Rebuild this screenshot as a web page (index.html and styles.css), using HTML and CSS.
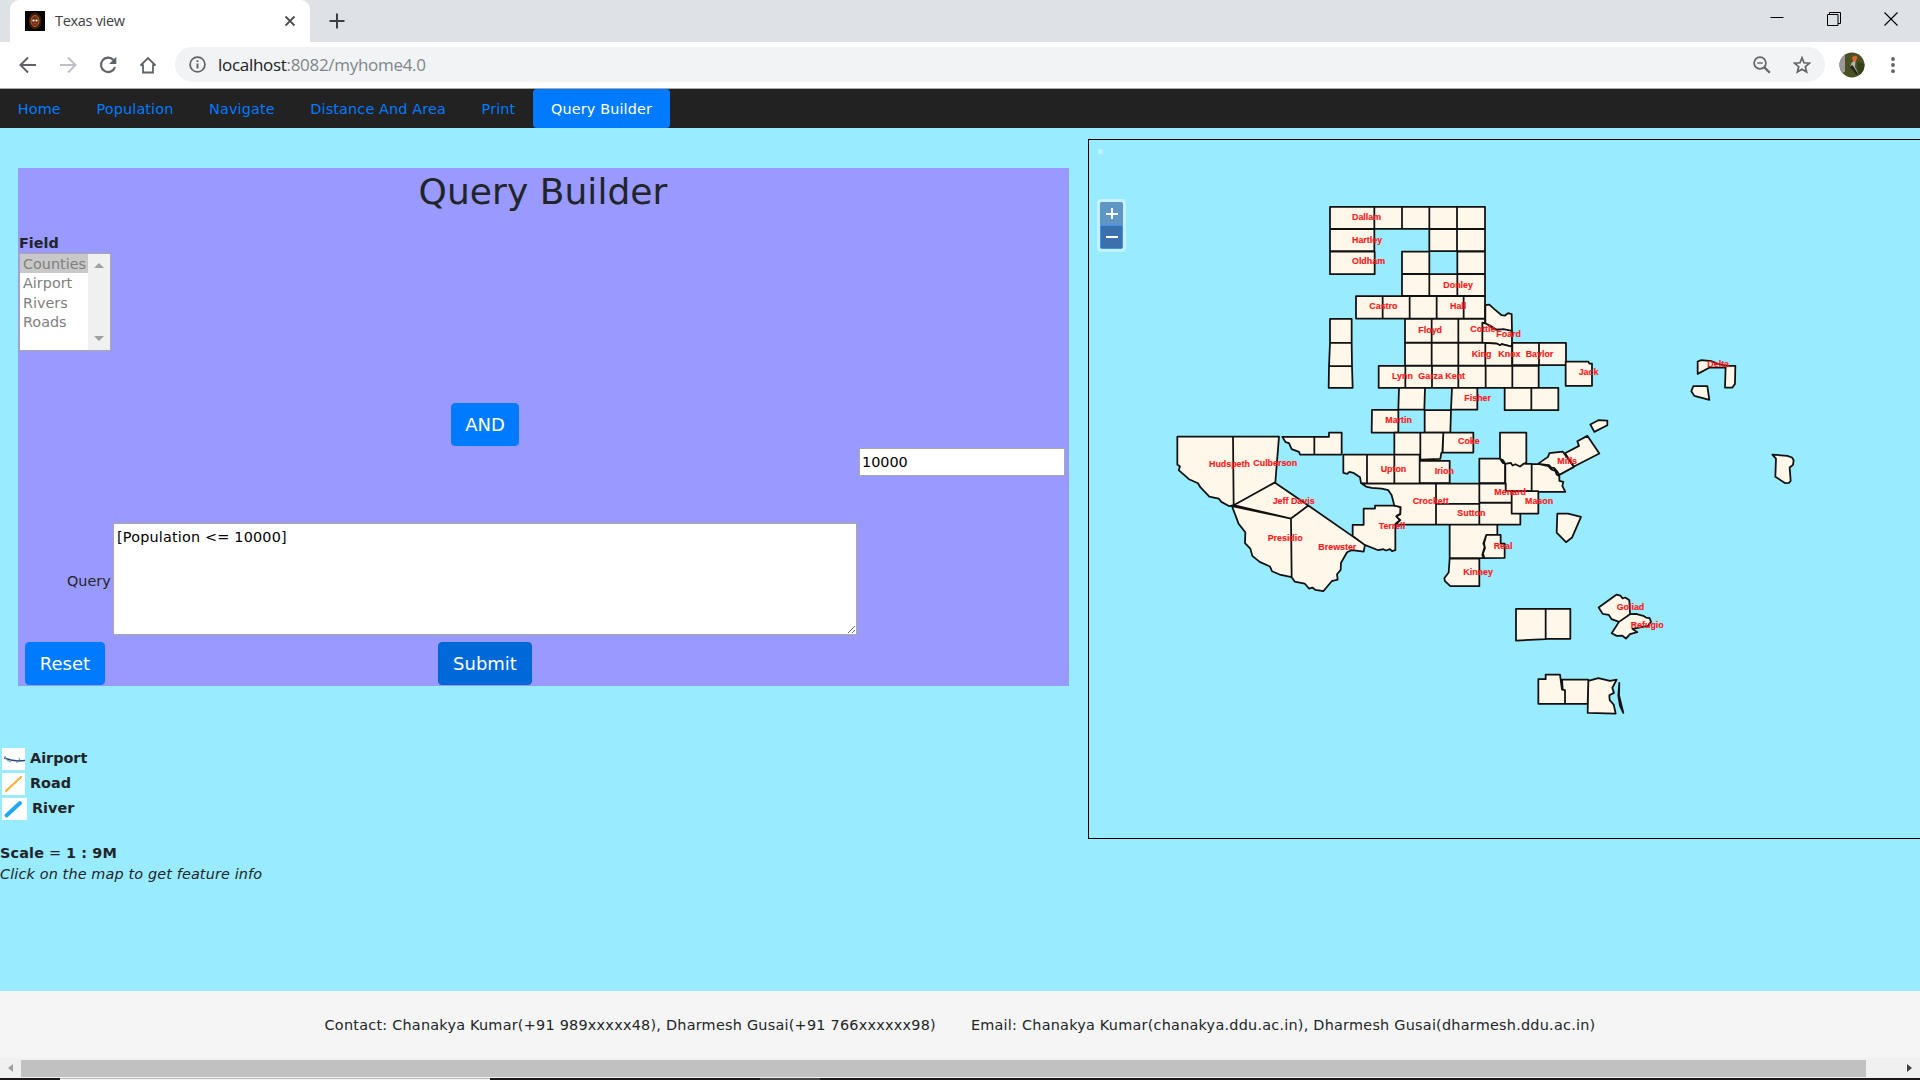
FILE: index.html
```html
<!DOCTYPE html>
<html lang="en">
<head>
<meta charset="utf-8">
<title>Texas view</title>
<link rel="stylesheet" href="styles.css">
</head>
<body>
<header class="tabstrip">
  <div class="tab">
    <svg class="favicon" width="20" height="20" viewBox="0 0 20 20"><rect width="20" height="20" fill="#050404"/><ellipse cx="10" cy="10" rx="6.5" ry="8.5" fill="#3a1c08"/><ellipse cx="10" cy="10" rx="4" ry="5.500" fill="#6e2f10" stroke="#b9682a"/><circle cx="8.500" cy="9.500" r="1.100" fill="#fff"/><circle cx="11.500" cy="9.500" r="1.100" fill="#fff"/><path d="M8.500 12.500h3" stroke="#c33" stroke-width="1.200"/></svg>
    <span class="tab-title">Texas view</span>
    <svg class="tab-close" width="12" height="12" viewBox="0 0 12 12"><path d="M1.500 1.500l9 9M10.500 1.500l-9 9" stroke="#4b4f54" stroke-width="1.800"/></svg>
  </div>
  <svg class="new-tab" width="16" height="16" viewBox="0 0 16 16"><path d="M8 .5v15M.5 8h15" stroke="#3c4043" stroke-width="2"/></svg>
  <div class="window-buttons">
    <svg width="14" height="14" viewBox="0 0 14 14"><path d="M.5 5.500h13" stroke="#000"/></svg>
    <svg width="14" height="14" viewBox="0 0 14 14"><path d="M.5 2.500h10.500v11h-10.500zM2.500 2.500v-2h11v11h-2.500" fill="none" stroke="#000"/></svg>
    <svg width="14" height="14" viewBox="0 0 14 14"><path d="M.5 .5l13 13M13.500 .5l-13 13" stroke="#000" stroke-width="1.100"/></svg>
  </div>
</header>
<div class="toolbar">
  <div class="nav-icons">
    <svg width="18" height="18" viewBox="0 0 18 18"><path d="M17 9H2M9 1.500L1.500 9 9 16.500" fill="none" stroke="#5f6368" stroke-width="2"/></svg>
    <svg width="18" height="18" viewBox="0 0 18 18"><path d="M1 9h15M9 1.500L16.500 9 9 16.500" fill="none" stroke="#bdc1c6" stroke-width="2"/></svg>
    <svg width="18" height="18" viewBox="0 0 18 18"><path d="M14.500 4A7.200 7.200 0 1 0 16 11.200" fill="none" stroke="#5f6368" stroke-width="2.100"/><path d="M17.300 .8v7.200h-7.200z" fill="#5f6368"/></svg>
    <svg width="18" height="18" viewBox="0 0 18 18"><path d="M4 8.500v8h10v-8M1.500 9.500L9 2l7.500 7.500M1.500 9h3M13.500 9h3" fill="none" stroke="#5f6368" stroke-width="1.800"/></svg>
  </div>
  <div class="address">
    <svg width="17" height="17" viewBox="0 0 17 17"><circle cx="8.500" cy="8.500" r="7.400" fill="none" stroke="#5f6368" stroke-width="1.700"/><path d="M8.500 7.600v5M8.500 4.200v1.900" stroke="#5f6368" stroke-width="1.900"/></svg>
    <span class="url"><b>localhost</b>:8082/myhome4.0</span>
    <svg class="zoom-icon" width="18" height="18" viewBox="0 0 18 18"><circle cx="7" cy="7" r="5.900" fill="none" stroke="#5f6368" stroke-width="1.700"/><path d="M4.200 7h5.600" stroke="#5f6368" stroke-width="1.400"/><path d="M11 11l5.800 5.800" stroke="#5f6368" stroke-width="2.200"/></svg>
    <svg class="star" width="18" height="18" viewBox="0 0 18 18"><path d="M9 1.800l2 5 5.400.4-4.100 3.500 1.300 5.300L9 13.200 4.400 16l1.300-5.300L1.600 7.200 7 6.800z" fill="none" stroke="#5f6368" stroke-width="1.700"/></svg>
  </div>
  <svg class="avatar" width="26" height="26" viewBox="0 0 26 26"><defs><clipPath id="face"><circle cx="13" cy="13" r="12.500"/></clipPath></defs><g clip-path="url(#face)"><rect width="26" height="26" fill="#4b5024"/><path d="M0 2l6 1v17l-6 2z" fill="#9a9898"/><path d="M18 10l8 2v14h-6z" fill="#34401c"/><path d="M13 5l4-1.500 1.500 2-1.500 3.500-3 1z" fill="#d9652a"/><path d="M13 10l3.500-1-.5 6 3 6-4-2-4-4z" fill="#b9b2a8"/><path d="M10.500 15l3-2 5 8-1 2-4-5z" fill="#25251f"/></g></svg>
  <svg class="dots" width="6" height="18" viewBox="0 0 6 18"><g fill="#5f6368"><circle cx="3" cy="3" r="1.900"/><circle cx="3" cy="9" r="1.900"/><circle cx="3" cy="15.200" r="1.900"/></g></svg>
</div>
<nav class="menu"><a>Home</a><a>Population</a><a>Navigate</a><a>Distance And Area</a><a>Print</a><a class="active">Query Builder</a></nav>
<main class="content">
  <section class="left">
    <form class="builder">
      <h1>Query Builder</h1>
      <div class="field">
        <strong>Field</strong>
        <div class="listbox">
          <ul><li class="selected"><span>Counties</span></li><li><span>Airport</span></li><li><span>Rivers</span></li><li><span>Roads</span></li></ul>
          <div class="list-scroll"><i class="up"></i><i class="down"></i></div>
        </div>
      </div>
      <div class="and-row"><button type="button" class="btn">AND</button></div>
      <div class="value-row"><input value="10000"></div>
      <div class="query-row"><label>Query</label><textarea>[Population &lt;= 10000]</textarea></div>
      <div class="actions"><button type="button" class="btn">Reset</button><button type="button" class="btn submit">Submit</button></div>
    </form>
    <ul class="legend">
      <li><svg width="23" height="22" viewBox="0 0 23 22"><rect width="23" height="22" fill="#fff"/><path d="M2 10l7 2 7 1 7-.6" fill="none" stroke="#27476d" stroke-width="1.500"/><path d="M3 8l1 3M5 12l4 2M15 13v2M17 10l1 2" stroke="#6f9fc5" stroke-width="1.200"/></svg><span>Airport</span></li>
      <li><svg width="23" height="22" viewBox="0 0 23 22"><rect width="23" height="22" fill="#fff"/><path d="M4 18L19 4" stroke="#ffaf3d" stroke-width="2.200" stroke-linecap="round"/></svg><span>Road</span></li>
      <li><svg width="25" height="22" viewBox="0 0 25 22"><rect width="25" height="22" fill="#fff"/><path d="M4.500 17.500L18 5" stroke="#22a9f5" stroke-width="4" stroke-linecap="round"/></svg><span>River</span></li>
    </ul>
    <p class="scale"><b>Scale</b> = <b>1 : 9M</b></p>
    <p class="hint">Click on the map to get feature info</p>
  </section>
  <section class="map">
    <svg class="counties" width="831" height="698" viewBox="1089 139.800 831 698">
      <g class="shapes" transform="translate(1080 130) scale(.33333)">
        <path d="M750 230H883V296H750zM883 230H966V296H883zM966 230H1048V296H966zM1048 230H1131V296H1048zM1131 230H1215V296H1131zM750 297H883V363H750zM1048 297H1131V363H1048zM1131 297H1215V363H1131zM750 364H884V432H750zM966 364H1048V431H966zM1132 364H1215V431H1132zM966 432H1048V497H966zM1048 432H1132V497H1048zM1132 432H1215V497H1132z"/>
        <path d="M828 498H908V565H828zM908 498H989V565H908zM989 498H1070V565H989zM1070 498H1151V565H1070zM1151 498H1215V565H1151zM750 566H815V638H750zM750 638H815L816 708H747zM747 708H816L818 773H746z"/>
        <path d="M975 566H1055V637H975zM1055 566H1135V637H1055zM1135 566H1215V578L1207 577V637H1135zM1216 525L1228 523 1242 536 1265 555 1275 556 1284 549 1295 552 1296 602 1270 597 1250 599 1230 586 1216 580zM1207 577L1218 580 1245 598 1270 597 1296 602V650L1265 642 1260 645 1250 640 1207 637z"/>
      </g>
      <g class="shapes" transform="translate(1300 300) scale(.33333)">
        <path d="M315 128H395V196H315zM395 128H475V196H395zM475 128H556V196H475zM556 128L590 130 600 135 605 132 636 139V196H556zM637 128H717V195H637zM717 128H798V195H717z"/>
        <path d="M236 197H316V263H236zM316 197H396V263H316zM396 197H475V263H396zM475 197H557V263H475zM557 197H637V263H557zM637 197H716V263H637zM797 184H865L868 190H876V257H797z"/>
        <path d="M297 263H375L373 328H295zM456 263H532V328H453zM614 263H694V330H614zM694 263H775V330H694zM216 329H295V397H215zM374 330H453L451 397H374z"/>
        <path d="M283 397H361V463H283zM361 397H430L427 457 424 458 421 476 361 478zM430 397H520V457H428zM130 463H201V550L183 549 180 531 160 518 148 515 142 521 130 518zM201 463H283V550H201zM283 463H359V550H283zM359 482H449V549H359z"/>
        <path d="M600 397H679V488L672 490 660 499 646 492 638 496 632 488 616 491 609 480 600 475zM538 475H600L608 488 615 490V549H538zM616 491L632 488 638 496 646 492 660 499 672 490 695 491V573H616zM695 492L715 491 745 498 754 508 766 512 770 523 778 528 778 542 790 545 787 557 796 575H695zM714 491L744 470 748 459 788 454 822 500 778 524 770 512 762 503 754 502 747 495zM795 459L837 437 832 423 862 407 898 460 822 499zM871 373L895 360 922 361V375L883 395z"/>
      </g>
      <g class="shapes" transform="translate(1160 400) scale(.33333)">
        <path d="M52 109H219L221 315 208 318 184 305 176 295 148 289 121 261 114 249 87 237 56 210 60 199 52 193zM219 109H357L346 246 221 315zM221 315L344 247 445 316 393 355zM216 318L393 355 395 531 359 523 336 513 330 499 299 485 277 467 271 445 255 429 256 396 236 371zM393 355L445 316 615 434 611 454 575 450 561 456 543 488 542 509 531 522 533 538 515 543 490 573 466 569 457 562 447 565 434 550 404 544 395 531z"/>
        <path d="M367 110H463V163H420L417 155 395 147 387 129 377 126zM463 110H507V97H545V163H463zM578 374H611V325H645V316H707L722 321 721 341 710 347 719 361 706 371V450L696 453 690 447 678 451 670 447 655 450 614 434 578 407z"/>
      </g>
      <g class="shapes" transform="translate(1360 410) scale(.33333)">
        <path d="M5 220H228V343H107L121 330 109 319 121 312 122 291 103 286 95 255 85 240 65 235 35 233 18 229zM228 220H358V281H228zM358 220H437V242H455V277H358zM228 281H358V343H228zM358 278H455V310H481V343H358zM455 243H535V310H455zM269 343H412V374H379L372 400 375 413 369 430 373 444H269zM379 374H422V400H434V443L371 444 367 434 374 410 370 400zM269 445H358V528H271L255 513 253 504 266 487zM592 310H624L663 320 636 382 618 396 590 367z"/>
      </g>
      <g class="shapes" transform="translate(1500 340) scale(.33333)">
        <path d="M593 64L604 60 635 63 653 71 677 76V82H629L593 101zM677 77H706L705 131 697 142H675zM580 138H622L628 179 583 167 574 153zM817 343L862 347 876 352 881 360 879 374 869 382 872 422 867 428 856 429 826 410 828 355z"/>
        <path d="M48 806H137V897L48 901zM137 806H211V896H137zM296 802L350 763 361 766 368 775 376 772 388 780 390 822 357 845 335 837 326 824 308 821zM357 845L390 822 408 821 432 828 438 832 449 834 453 845 444 857 397 866 412 876 390 882 378 895 366 886 350 887 335 879z"/>
        <path d="M115 1017H137V1003H180L186 1048 195 1050V1091H115zM186 1018H265L263 1091H195V1050L188 1047zM265 1022L295 1014 330 1022 350 1018 337 1043 342 1058 328 1065 329 1080 341 1093 347 1120 263 1118zM358 1028L357 1065 370 1118 360 1097 355 1066z"/>
      </g>
      <g class="names" transform="translate(1080 130) scale(.33333)"><text x="816" y="268">Dallam</text><text x="816" y="337">Hartley</text><text x="816" y="402">Oldham</text><text x="1090" y="472">Donley</text><text x="868" y="536">Castro</text><text x="1110" y="536">Hall</text><text x="1015" y="609">Floyd</text><text x="1171" y="605">Cottle</text><text x="1249" y="621">Foard</text><text x="1175" y="679">King</text><text x="1255" y="679">Knox</text><text x="1337" y="679">Baylor</text><text x="936" y="747">Lynn</text><text x="1015" y="745">Garza</text><text x="1096" y="745">Kent</text></g>
      <g class="names" transform="translate(1300 300) scale(.33333)"><text x="836" y="224">Jack</text><text x="493" y="301">Fisher</text><text x="256" y="367">Martin</text><text x="474" y="431">Coke</text><text x="242" y="514">Upton</text><text x="404" y="521">Irion</text><text x="772" y="492">Mills</text><text x="583" y="585">Menard</text></g>
      <g class="names" transform="translate(1160 400) scale(.33333)"><text x="147" y="200">Hudspeth</text><text x="280" y="198">Culberson</text><text x="338" y="312">Jeff Davis</text><text x="323" y="421">Presidio</text><text x="475" y="450">Brewster</text><text x="656" y="386">Terrell</text></g>
      <g class="names" transform="translate(1360 410) scale(.33333)"><text x="158" y="280">Crockett</text><text x="495" y="281">Mason</text><text x="292" y="316">Sutton</text><text x="401" y="417">Real</text><text x="310" y="495">Kinney</text></g>
      <g class="names" transform="translate(1500 340) scale(.33333)"><text x="622" y="81">Delta</text><text x="350" y="809">Goliad</text><text x="392" y="863">Refugio</text></g>
    </svg>
    <span class="map-dot"></span>
    <div class="zoom-control"><span class="zoom-in"></span><span class="zoom-out"></span></div>
  </section>
</main>
<footer class="contact"><span>Contact: Chanakya Kumar(+91 989xxxxx48), Dharmesh Gusai(+91 766xxxxxx98)</span><span>Email: Chanakya Kumar(chanakya.ddu.ac.in), Dharmesh Gusai(dharmesh.ddu.ac.in)</span></footer>
<div class="hscroll"><i class="arrow-left"></i><div class="thumb"></div><i class="arrow-right"></i></div>
<div class="taskbar"><i class="task-open"></i><i class="task-dim"></i></div>
</body>
</html>
```
FILE: styles.css
```css
* { box-sizing: border-box; }
body { margin: 0; width: 1920px; height: 1080px; overflow: hidden; background: #99ebff; color: #212529; font: 14.4px/21.6px Verdana, "DejaVu Sans", sans-serif; }
svg { display: block; flex: none; }
h1, p, ul { margin: 0; padding: 0; list-style: none; }

.tabstrip { display: flex; align-items: flex-start; height: 42px; padding-left: 10px; background: #dee1e6; }
.tab { display: flex; align-items: center; width: 300px; height: 42px; padding: 0 14px 0 15px; background: #fff; border-radius: 9px 9px 0 0; }
.tab-title { flex: 1; margin-left: 10px; font: 14.5px/20px "Open Sans", sans-serif; letter-spacing: -.3px; color: #3c4043; }
.new-tab { margin: 13px 0 0 19px; }
.window-buttons { display: flex; gap: 43px; margin: 12px 22px 0 auto; }

.toolbar { display: flex; align-items: center; height: 47px; padding: 0 24px 1px 19px; background: #fff; border-bottom: 1px solid #a9a9a9; }
.nav-icons { display: flex; gap: 22px; width: 156px; }
.address { display: flex; align-items: center; width: 1650px; height: 35px; padding: 0 14px; background: #f1f3f4; border-radius: 18px; }
.url { margin-left: 12px; font: 17px/24px "Open Sans", sans-serif; letter-spacing: -.3px; color: #80868b; }
.url b { font-weight: 400; color: #202124; }
.zoom-icon { margin-left: auto; }
.star { margin-left: 22px; }
.avatar { margin-left: 14px; }
.dots { margin-left: auto; }

.menu { display: flex; height: 39px; background: #222; letter-spacing: .14px; }
.menu a { padding: 1px 17.800px 0; line-height: 39px; color: #007bff; }
.menu .active { color: #fff; background: #007bff; border-radius: 4px; }

.content { display: flex; height: 863px; }
.left { width: 1088px; padding-top: 40px; }
.builder { width: 1051px; height: 518px; margin-left: 18px; padding: 0 2px 1px 1px; background: #99f; }
h1 { height: 64px; padding-top: 2px; text-align: center; font-size: 36px; line-height: 43px; font-weight: 400; letter-spacing: .05px; }
.field { height: 171px; }
.field strong { display: block; height: 21px; line-height: 23px; }
.listbox { display: flex; width: 92px; height: 98px; background: #fff; border: 1px solid #a9a9a9; color: #808080; }
.listbox ul { width: 68px; }
.listbox li { height: 19.400px; padding-left: 3px; line-height: 20px; }
.listbox .selected { background: #c8c8c8; }
.list-scroll { display: flex; flex-direction: column; align-items: center; justify-content: space-between; width: 22px; margin-left: auto; padding: 9px 0; background: #f0f0f0; }
.list-scroll i { border: 5px solid transparent; }
.list-scroll .up { border-top: 0; border-bottom-color: #a0a0a0; }
.list-scroll .down { border-bottom: 0; border-top-color: #a0a0a0; }
.btn { height: 43px; padding: 0; font: 18px/27px Verdana, "DejaVu Sans", sans-serif; color: #fff; background: #007bff; border: 1px solid #007bff; border-radius: 4px; }
.and-row { height: 45px; padding-left: 432px; }
.and-row .btn { width: 68px; }
.value-row { height: 75px; padding-left: 840px; }
.value-row input { display: block; width: 206px; height: 28px; padding: 1px 2px; font: inherit; color: #000; border: 1px solid #a9a9a9; }
.query-row { display: flex; align-items: center; height: 112px; padding-left: 48px; }
.query-row label { width: 46px; margin-top: 6px; }
.query-row textarea { width: 744px; height: 112px; padding: 3px 3px 2px; font: 14.4px/20px Verdana, "DejaVu Sans", sans-serif; letter-spacing: .19px; color: #000; border: 1px solid #a9a9a9; outline: 0; overflow: hidden; }
.actions { display: flex; gap: 333px; padding: 7px 0 0 6px; }
.actions .btn { width: 80px; }
.actions .submit { width: 94px; background: #0069d9; border-color: #0062cc; }

.legend { padding: 62px 0 0 2px; font-weight: 700; }
.legend li { display: flex; gap: 5px; height: 25px; }
.legend span { line-height: 20.500px; }
.scale { margin-top: 19px; line-height: 22px; letter-spacing: .17px; }
.hint { font-style: italic; line-height: 21px; letter-spacing: .14px; }

.map { position: relative; width: 832px; height: 700px; margin-top: 11px; border: 1px solid #000; border-right: 0; }
.shapes path { fill: #fff7ea; stroke: #111; stroke-width: 5.300; stroke-linejoin: round; }
.names text { font: 700 26.700px "Liberation Sans", sans-serif; fill: #fb1a20; stroke: #fb1a20; stroke-width: .500; }
.map-dot { position: absolute; left: 9px; top: 9px; width: 5px; height: 5px; background: #c2f3ff; border-radius: 2px; }
.zoom-control { position: absolute; left: 8px; top: 59px; width: 29px; height: 53px; padding: 3px; background: #c2f3ff; border-radius: 4px; }
.zoom-control span { display: flex; align-items: center; justify-content: center; height: 23px; background: #6096c5; border-radius: 2px 2px 0 0; }
.zoom-control span::before { content: ""; width: 12px; height: 2px; background: #fff; }
.zoom-control .zoom-in::after { content: ""; width: 2px; height: 11px; margin: 0 5px 0 -7px; background: #fff; }
.zoom-control .zoom-out { height: 24px; background: #3a70ac; border: 1px solid #4390f5; border-radius: 0 0 2px 2px; }

.contact { display: flex; justify-content: center; gap: 35px; height: 67px; padding-top: 24px; background: #f5f5f5; white-space: nowrap; letter-spacing: .245px; }
.hscroll { display: flex; align-items: center; height: 20px; padding: 0 8px; background: #f0f0f0; }
.hscroll .thumb { width: 1845px; height: 17px; margin-left: 8px; background: #c1c1c1; }
.arrow-left { border: 4px solid transparent; border-left: 0; border-right: 5px solid #a0a0a0; }
.arrow-right { margin-left: auto; border: 4px solid transparent; border-right: 0; border-left: 5px solid #404040; }
.taskbar { display: flex; height: 2px; background: #1c1819; }
.task-open { width: 430px; margin-left: 60px; border-top: 1px solid #bbb; background: #f3f3f3; }
.task-dim { width: 60px; margin-left: 270px; background: #444; }
```
